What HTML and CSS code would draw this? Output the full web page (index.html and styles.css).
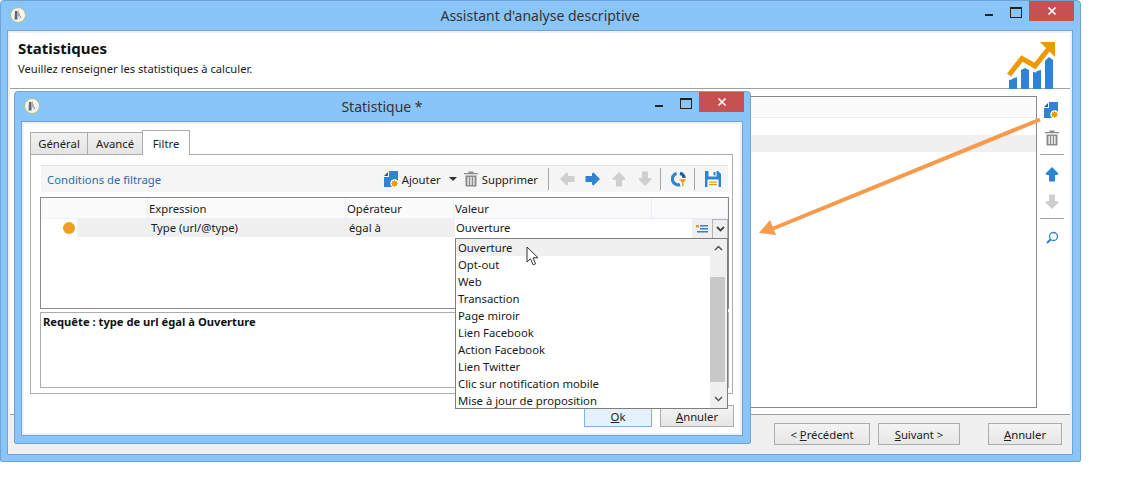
FILE: index.html
```html
<!DOCTYPE html>
<html lang="fr">
<head>
<meta charset="UTF-8">
<title>Assistant d'analyse descriptive</title>
<link rel="stylesheet" href="styles.css">
</head>
<body>
<div class="desk">

<div class="win win-main">
  <div class="titlebar">
    <svg class="appicon" width="18" height="18" viewBox="0 0 18 18"><use href="#app"/></svg>
    <span class="title">Assistant d'analyse descriptive</span>
    <div class="winbtns">
      <span class="wb wb-min"></span>
      <span class="wb wb-max"></span>
      <span class="wb wb-close"><svg width="10" height="10" viewBox="0 0 10 10"><path d="M1.5 1.5l7 7M8.5 1.5l-7 7" stroke="#fff" stroke-width="1.7"/></svg></span>
    </div>
  </div>
  <div class="client">
    <div class="head">
      <div class="head-text">
        <h1>Statistiques</h1>
        <p>Veuillez renseigner les statistiques à calculer.</p>
      </div>
      <svg class="logo" width="50" height="50" viewBox="0 0 50 50">
        <path d="M2 49V40l8-3v12zM14 49V30l4-2 4 2v19zM26 49V32l8-2v19zM38 49V20l4-3 4 3v29z" fill="#2e84d2"/>
        <path d="M2 38.500L15 22l13 7.500L43 11" fill="none" stroke="#fff" stroke-width="5"/>
        <path d="M2 35L15 18.500 28 26 43 7" fill="none" stroke="#ef9800" stroke-width="5"/>
        <path d="M33 2h15v15z" fill="#ef9800"/>
      </svg>
    </div>
    <div class="work">
      <div class="listbox">
        <div class="list-head"></div>
        <div class="list-gap"></div>
        <div class="list-row"></div>
      </div>
      <div class="sidebar">
        <svg class="ico" width="16" height="16" viewBox="0 0 16 16"><use href="#add"/></svg>
        <svg class="ico" width="16" height="16" viewBox="0 0 16 16"><use href="#trash"/></svg>
        <span class="side-sep"></span>
        <svg class="ico" width="16" height="16" viewBox="0 0 16 16"><use href="#up" fill="#2e84d2"/></svg>
        <svg class="ico" width="16" height="16" viewBox="0 0 16 16"><use href="#up" fill="#cfcfcf" transform="rotate(180 8 8)"/></svg>
        <span class="side-sep"></span>
        <svg class="ico" width="16" height="16" viewBox="0 0 16 16"><circle cx="9.500" cy="6.500" r="4" fill="none" stroke="#2e84d2" stroke-width="1.300"/><path d="M6.500 9.500L3 13" stroke="#2e84d2" stroke-width="2"/></svg>
      </div>
    </div>
    <div class="foot">
      <button class="btn btn-prev">&lt; <u>P</u>récédent</button>
      <button class="btn btn-next"><u>S</u>uivant &gt;</button>
      <button class="btn btn-cancel"><u>A</u>nnuler</button>
    </div>
  </div>
</div>

<div class="win win-dialog">
  <div class="titlebar">
    <svg class="appicon" width="18" height="18" viewBox="0 0 18 18"><use href="#app"/></svg>
    <span class="title">Statistique *</span>
    <div class="winbtns">
      <span class="wb wb-min"></span>
      <span class="wb wb-max"></span>
      <span class="wb wb-close"><svg width="10" height="10" viewBox="0 0 10 10"><path d="M1.5 1.5l7 7M8.5 1.5l-7 7" stroke="#fff" stroke-width="1.7"/></svg></span>
    </div>
  </div>
  <div class="client client-dialog">
    <div class="tabs">
      <span class="tab">Général</span>
      <span class="tab">Avancé</span>
      <span class="tab tab-on">Filtre</span>
    </div>
    <div class="tabpanel">
      <div class="toolbar">
        <span class="tb-title">Conditions de filtrage</span>
        <svg class="tb-ico tb-first" width="16" height="16" viewBox="0 0 16 16"><use href="#add"/></svg>
        <span class="tb-label tb-add">Ajouter</span>
        <span class="caret"></span>
        <svg class="tb-ico tb-trash" width="16" height="16" viewBox="0 0 16 16"><use href="#trash"/></svg>
        <span class="tb-label">Supprimer</span>
        <span class="tb-sep tb-sep-wide"></span>
        <svg class="tb-ico" width="16" height="16" viewBox="0 0 16 16"><use href="#up" fill="#cfcfcf" transform="rotate(-90 8 8)"/></svg>
        <svg class="tb-ico" width="16" height="16" viewBox="0 0 16 16"><use href="#up" fill="#2e84d2" transform="rotate(90 8 8)"/></svg>
        <svg class="tb-ico" width="16" height="16" viewBox="0 0 16 16"><use href="#up" fill="#cfcfcf"/></svg>
        <svg class="tb-ico" width="16" height="16" viewBox="0 0 16 16"><use href="#up" fill="#cfcfcf" transform="rotate(180 8 8)"/></svg>
        <span class="tb-sep"></span>
        <svg class="tb-ico" width="16" height="16" viewBox="0 0 16 16">
          <path d="M5.500 2.400A5.800 5.800 0 0 0 9 13.600" fill="none" stroke="#2e84d2" stroke-width="3.200"/>
          <path d="M9 2.200A5.800 5.800 0 0 1 13.300 7" fill="none" stroke="#1f5f9e" stroke-width="3.200"/>
          <path d="M7.500 8h8.500l-3.200 3.400V16l-2.100-1v-3.600z" fill="#ef9800" stroke="#fff" stroke-width=".6"/>
        </svg>
        <span class="tb-sep"></span>
        <svg class="tb-ico" width="16" height="16" viewBox="0 0 16 16">
          <path d="M0 0h13l3 3v13H0z" fill="#2e84d2"/>
          <path d="M3.500 0h8v5.500h-8z" fill="#fff"/>
          <path d="M8.500 1h2v3.500h-2z" fill="#2e84d2"/>
          <path d="M2.500 8.500h11V16h-11z" fill="#fff"/>
          <path d="M4 10.500h8v1.300H4zM4 13h8v1.300H4z" fill="#ef9800"/>
        </svg>
      </div>
      <div class="grid">
        <div class="grid-head">
          <span class="col-a"></span>
          <span class="col-b">Expression</span>
          <span class="col-c">Opérateur</span>
          <span class="col-d">Valeur</span>
          <span class="col-e"></span>
        </div>
        <div class="grid-row">
          <span class="col-a"><i class="dot"></i></span>
          <span class="col-b cell">Type (url/@type)</span>
          <span class="col-c cell">égal à</span>
        </div>
      </div>
      <div class="query">Requête : type de url égal à Ouverture</div>
    </div>
    <div class="dlg-foot">
      <button class="btn btn-ok"><u>O</u>k</button>
      <button class="btn btn-cancel2"><u>A</u>nnuler</button>
    </div>
  </div>
</div>

<div class="combo">
  <span class="combo-input">Ouverture</span>
  <span class="combo-list">
    <svg width="12" height="10" viewBox="0 0 12 10"><path d="M0 1h3v2.500H0z" fill="#ef9800"/><path d="M4 1h8v1.500H4zM4 4h8v1.500H4zM1 7h11v1.500H1z" fill="#2e84d2"/></svg>
  </span>
  <span class="combo-arrow"><svg width="9" height="6" viewBox="0 0 9 6"><path d="M1 1l3.500 3.500L8 1" fill="none" stroke="#444" stroke-width="1.800"/></svg></span>
</div>

<div class="popup">
  <ul class="items">
    <li class="item-on">Ouverture</li>
    <li>Opt-out</li>
    <li>Web</li>
    <li>Transaction</li>
    <li>Page miroir</li>
    <li>Lien Facebook</li>
    <li>Action Facebook</li>
    <li>Lien Twitter</li>
    <li>Clic sur notification mobile</li>
    <li>Mise à jour de proposition</li>
  </ul>
  <div class="scroll">
    <span class="scroll-btn"><svg width="9" height="6" viewBox="0 0 9 6"><path d="M1 5l3.500-3.500L8 5" fill="none" stroke="#555" stroke-width="1.500"/></svg></span>
    <span class="scroll-track"><span class="scroll-thumb"></span></span>
    <span class="scroll-btn"><svg width="9" height="6" viewBox="0 0 9 6"><path d="M1 1l3.500 3.500L8 1" fill="none" stroke="#555" stroke-width="1.500"/></svg></span>
  </div>
</div>

<svg class="cursor" width="14" height="21" viewBox="0 0 14 21"><path d="M1 1v15l3.500-3.200 2.600 6 2.500-1-2.600-6H12z" fill="#fff" stroke="#333" stroke-width="1"/></svg>

<svg class="arrow" width="300" height="130" viewBox="0 0 300 130">
  <path d="M282 2.500L14 112" stroke="#f79a4c" stroke-width="4" fill="none"/>
  <path d="M1 116L12 103 18 118z" fill="#f79a4c"/>
</svg>

</div>

<svg width="0" height="0" class="defs">
  <defs>
    <g id="app">
      <circle cx="9" cy="9" r="7.500" fill="#f4f4f4" stroke="#a9c77a" stroke-width="1"/>
      <path d="M6 5h2.500v8.500H5.500zM9.500 3.500l1.200 6-1.200 1.200z" fill="#666"/>
      <path d="M11 9.500l1.500 1.500-2 2z" fill="#999"/>
    </g>
    <g id="add">
      <path d="M0 5L4 1v4z" fill="#1f5f9e"/>
      <path d="M5 0h9v10H8v6H0V6h5z" fill="#2e84d2"/>
      <circle cx="10.500" cy="12.500" r="4.200" fill="#fff"/>
      <circle cx="10.500" cy="12.500" r="2.600" fill="#ef9800"/>
      <path d="M10.500 9v7M7 12.500h7M8 10l5 5M13 10l-5 5" stroke="#ef9800" stroke-width=".8"/>
    </g>
    <g id="trash" fill="#8c8c8c">
      <path d="M5.500 0.500h5v1.500h4.500v1.300H1V2h4.500z"/>
      <path d="M2.500 4.500h11V15.500h-11zM4.500 6v8h1.300V6zM7.300 6v8h1.400V6zM10.200 6v8h1.300V6z" fill-rule="evenodd"/>
    </g>
    <path id="up" d="M8 1l6.500 6.500-1 1.500H11v6.500H5V9H2.500l-1-1.500z"/>
  </defs>
</svg>
</body>
</html>
```

FILE: styles.css
```css
* {
    margin: 0;
    padding: 0;
    box-sizing: border-box;
}
body {
    margin: 0;
    background: #fff;
    font-family: "Noto Sans", sans-serif;
    font-size: 11.3px;
    color: #1a1a1a;
}
.desk {
    position: relative;
    width: 1124px;
    height: 503px;
    overflow: hidden;
}
.defs {
    position: absolute;
}

/* windows */
.win {
    display: flex;
    flex-direction: column;
    background: #8ac5fa;
    border: 1px solid #6fa3d4;
    border-radius: 4px 4px 2px 2px;
}
.win-main {
    width: 1081px;
    height: 462px;
    padding: 0 7px 6px 6px;
}
.win-dialog {
    position: absolute;
    left: 14px;
    top: 91px;
    width: 737px;
    height: 353px;
    padding: 0 7px 7px 6px;
}
.titlebar {
    position: relative;
    flex: none;
    height: 29px;
    display: flex;
    align-items: center;
    justify-content: center;
}
.appicon {
    position: absolute;
    left: 2px;
    top: 5px;
}
.title {
    font-size: 14px;
    color: #333;
}
.winbtns {
    position: absolute;
    right: -1px;
    top: 0;
    display: flex;
    align-items: center;
}
.wb {
    display: flex;
    align-items: center;
    justify-content: center;
    height: 20px;
}
.wb-min::before {
    content: "";
    width: 8px;
    height: 2px;
    background: #222;
    margin-top: 8px;
}
.wb-min {
    width: 27px;
}
.wb-max {
    width: 27px;
}
.wb-max::before {
    content: "";
    width: 10px;
    height: 8px;
    border: 1px solid #222;
    border-top-width: 2px;
    margin-top: 2px;
}
.wb-close {
    width: 45px;
    background: #c75050;
}
.client {
    flex: 1;
    display: flex;
    flex-direction: column;
    border: 1px solid #6fa3d4;
    background: #f0f0f0;
    padding: 2px;
    min-height: 0;
}

/* main wizard */
.head {
    flex: none;
    height: 56px;
    background: #fff;
    border-bottom: 1px solid #a0a0a0;
    padding: 5px 0 0 8px;
    display: flex;
    justify-content: space-between;
}
.head h1 {
    font-size: 15px;
    line-height: 20px;
    font-weight: 700;
    color: #111;
}
.head p {
    font-size: 11.2px;
    line-height: 18px;
    margin-top: 2px;
}
.logo {
    margin: 2px 13px 0 0;
}
.work {
    flex: 1;
    background: #fff;
    border-bottom: 1px solid #a0a0a0;
    padding: 7px 0 6px 0;
    display: flex;
    justify-content: flex-end;
    min-height: 0;
}
.listbox {
    width: 700px;
    border: 1px solid #858a8f;
    display: flex;
    flex-direction: column;
}
.list-head {
    height: 21px;
    background: #fbfbfb;
    border-bottom: 1px solid #e8f0f8;
}
.list-gap {
    height: 17px;
}
.list-row {
    height: 17px;
    background: #f0f0f0;
}
.sidebar {
    width: 33px;
    display: flex;
    flex-direction: column;
    align-items: center;
    padding: 6px 4px 0 0;
}
.ico {
    flex: none;
    margin-bottom: 12px;
}
.side-sep {
    flex: none;
    width: 24px;
    height: 1px;
    background: #a0a0a0;
    margin: -4px 0 11px;
}
.foot {
    flex: none;
    height: 37px;
    display: flex;
    align-items: center;
    padding-top: 1px;
}
.btn {
    height: 22px;
    font: inherit;
    color: #222;
    border: 1px solid #acacac;
    background: linear-gradient(#f4f4f4, #e6e6e6);
}
.btn-prev {
    width: 96px;
    margin-left: 764px;
}
.btn-next {
    width: 82px;
    margin-left: 8px;
}
.btn-cancel {
    width: 74px;
    margin-left: 28px;
}

/* dialog */
.client-dialog {
    position: relative;
    background: #fff;
    padding: 9px 9px 0 8px;
    box-shadow: inset 0 0 0 2px #f0f0f0;
}
.tabs {
    display: flex;
    height: 24px;
    align-items: flex-end;
    flex: none;
    position: relative;
    z-index: 1;
}
.tab {
    display: flex;
    align-items: center;
    justify-content: center;
    width: 58px;
    height: 23px;
    border: 1px solid #acacac;
    background: linear-gradient(#f0f0f0, #e5e5e5);
    color: #222;
    margin-right: -1px;
}
.tab + .tab {
    width: 56px;
}
.tab-on {
    width: 48px !important;
    height: 25px;
    background: #fff;
    border-bottom: 0;
}
.tabpanel {
    flex: none;
    height: 240px;
    border: 1px solid #acacac;
    margin-top: -1px;
    padding: 10px 3px 0 10px;
}
.toolbar {
    height: 27px;
    background: #f5f5f5;
    border-top: 1px solid #e3e3e3;
    display: flex;
    align-items: center;
    padding: 0 7px 0 6px;
    margin-right: 1px;
    color: #222;
}
.tb-title {
    color: #2b6cb0;
    white-space: nowrap;
}
.tb-ico {
    flex: none;
    margin-left: 10px;
}
.tb-first {
    margin-left: auto;
}
.tb-trash {
    margin-left: 6px;
}
.tb-label {
    margin-left: 3px;
    white-space: nowrap;
}
.tb-add {
    margin-left: 2px;
}
.caret {
    flex: none;
    border: 4px solid transparent;
    border-top: 4px solid #333;
    border-bottom: 0;
    margin-left: 8px;
}
.tb-sep {
    flex: none;
    width: 1px;
    height: 22px;
    background: #a5a5a5;
    margin-left: 7px;
}
.tb-sep-wide {
    margin-left: 10px;
}
.grid {
    height: 112px;
    margin-top: 5px;
    margin-left: -1px;
    border: 1px solid #858a8f;
}
.grid-head,
.grid-row {
    display: grid;
    grid-template-columns: 107px 198px 108px 198px 1fr;
}
.grid-head {
    height: 21px;
    background: #fbfbfb;
    border-bottom: 1px solid #eef3fa;
    line-height: 22px;
}
.grid-head span {
    border-right: 1px solid #e8f0fb;
    padding-left: 1px;
}
.grid-row {
    height: 17px;
    line-height: 18px;
}
.grid-row .cell {
    background: #f0f0f0;
    padding-left: 3px;
}
.grid-row .col-c {
    grid-column: 3 / 6;
}
.grid-row .col-a {
    background: linear-gradient(90deg, #fff 36px, #f0f0f0 36px);
    display: flex;
    align-items: center;
    padding-left: 22px;
}
.dot {
    width: 12px;
    height: 12px;
    border-radius: 50%;
    background: #f0a020;
}
.query {
    height: 76px;
    margin-top: 3px;
    margin-left: -1px;
    border: 1px solid #acacac;
    padding: 1px 2px;
    font-weight: 700;
    font-size: 11.2px;
    color: #111;
}
.dlg-foot {
    display: flex;
    justify-content: flex-end;
    margin-top: 11px;
    margin-right: -1px;
}
.btn-ok {
    width: 68px;
    background: #e5f1fb;
    border-color: #7eb4ea;
}
.btn-cancel2 {
    width: 74px;
    margin-left: 8px;
}

/* value combo and its open list */
.combo {
    position: absolute;
    left: 455px;
    top: 218px;
    width: 273px;
    height: 20px;
    display: flex;
    background: #fff;
    border-top: 1px solid #e4ecf5;
}
.combo-input {
    flex: 1;
    line-height: 18px;
    padding-left: 1px;
}
.combo-list,
.combo-arrow {
    display: flex;
    align-items: center;
    justify-content: center;
    background: #efefef;
}
.combo-list {
    width: 20px;
}
.combo-arrow {
    width: 16px;
    border: 1px solid #b4b4b4;
    border-bottom: 0;
}
.popup {
    position: absolute;
    left: 455px;
    top: 238px;
    width: 273px;
    height: 171px;
    display: flex;
    background: #fff;
    border: 1px solid #7e7e7e;
}
.items {
    flex: 1;
    list-style: none;
}
.items li {
    height: 17px;
    line-height: 17px;
    padding-left: 2px;
}
.item-on {
    background: #f0f0f0;
}
.scroll {
    flex: none;
    width: 17px;
    display: flex;
    flex-direction: column;
    background: #f0f0f0;
}
.scroll-btn {
    flex: none;
    height: 18px;
    display: flex;
    align-items: center;
    justify-content: center;
}
.scroll-track {
    flex: 1;
    padding-top: 20px;
}
.scroll-thumb {
    display: block;
    width: 15px;
    height: 105px;
    background: #c8c8c8;
}
.cursor {
    position: absolute;
    left: 526px;
    top: 246px;
}
.arrow {
    position: absolute;
    left: 758px;
    top: 117px;
}
```
